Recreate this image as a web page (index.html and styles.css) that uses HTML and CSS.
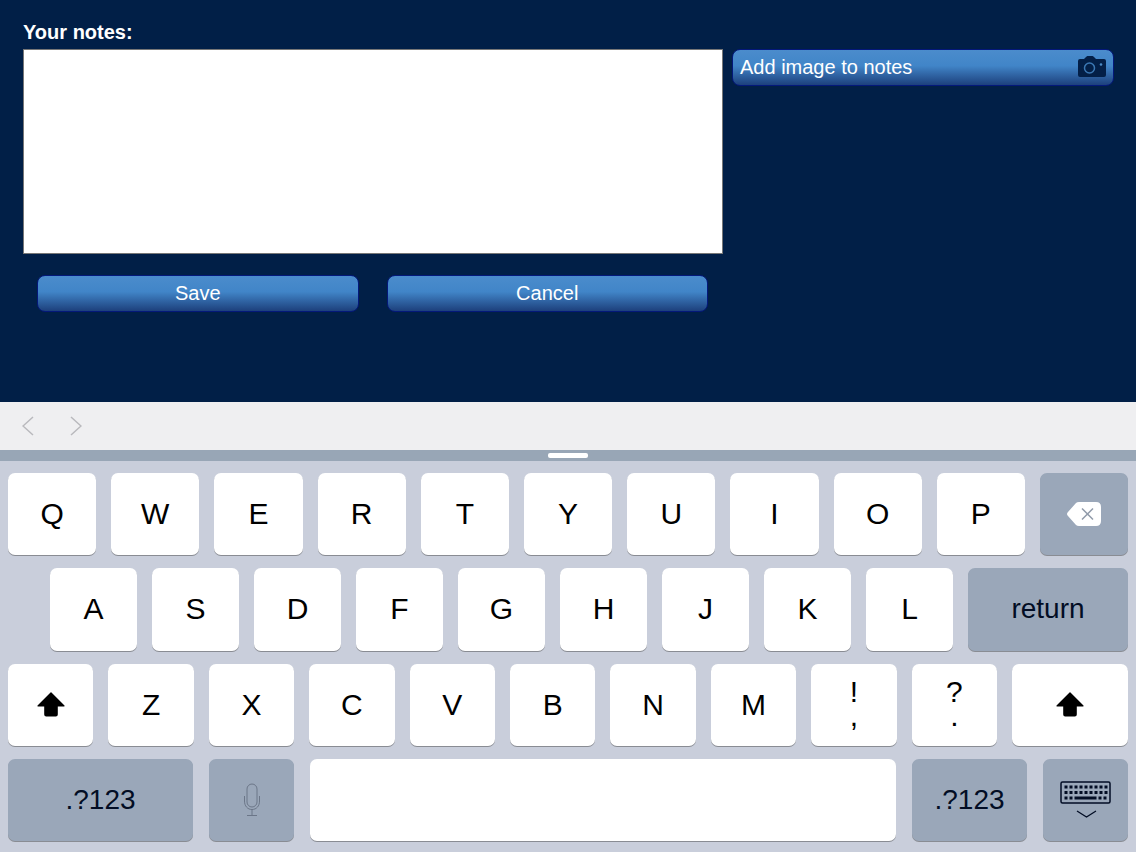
FILE: index.html
```html
<!DOCTYPE html>
<html lang="en">
<head>
  <meta charset="UTF-8">
  <meta name="viewport" content="width=device-width, initial-scale=1">
  <title>Your notes</title>
  <link rel="stylesheet" href="styles.css">
</head>
<body>

<form class="notes">
  <div class="notes-main">
    <label for="notes">Your notes:</label>
    <textarea id="notes"></textarea>
    <div class="actions">
      <button type="button" class="btn">Save</button>
      <button type="button" class="btn">Cancel</button>
    </div>
  </div>
  <div class="notes-side">
    <button type="button" class="btn btn-image">
      Add image to notes
      <svg width="28" height="22" viewBox="0 0 28 22">
        <path d="M2 3h4l2-2c1-1 1-1 2-1h4c1 0 1 0 2 1l2 2h8q2 0 2 2v14q0 2-2 2H2q-2 0-2-2V5q0-2 2-2z" fill="#031f47"/>
        <circle cx="11.500" cy="12" r="5" fill="none" stroke="#3b78b4" stroke-width="1.500"/>
        <circle cx="23" cy="8.500" r="1.300" fill="#4b8cc8"/>
      </svg>
    </button>
  </div>
</form>

<div class="assistant">
  <button type="button" aria-label="Previous field">
    <svg width="12" height="20" viewBox="0 0 12 20"><path d="M11 1L1 10l10 9"/></svg>
  </button>
  <button type="button" aria-label="Next field">
    <svg width="12" height="20" viewBox="0 0 12 20"><path d="M1 1l10 9-10 9"/></svg>
  </button>
</div>

<div class="handle"><span></span></div>

<div class="keyboard">
  <div class="row">
    <button type="button" class="key">Q</button>
    <button type="button" class="key">W</button>
    <button type="button" class="key">E</button>
    <button type="button" class="key">R</button>
    <button type="button" class="key">T</button>
    <button type="button" class="key">Y</button>
    <button type="button" class="key">U</button>
    <button type="button" class="key">I</button>
    <button type="button" class="key">O</button>
    <button type="button" class="key">P</button>
    <button type="button" class="key dark" aria-label="Delete">
      <svg width="34" height="26" viewBox="0 0 34 26">
        <path d="M12 1h17q5 0 5 5v14q0 5-5 5H12q-2 0-3-1L1 15q-2-2 0-4l8-9q1-1 3-1z" fill="#fff"/>
        <path d="M15 7.500l11 11M26 7.500l-11 11" stroke="#919baa" stroke-width="1.500" fill="none"/>
      </svg>
    </button>
  </div>
  <div class="row row-home">
    <button type="button" class="key">A</button>
    <button type="button" class="key">S</button>
    <button type="button" class="key">D</button>
    <button type="button" class="key">F</button>
    <button type="button" class="key">G</button>
    <button type="button" class="key">H</button>
    <button type="button" class="key">J</button>
    <button type="button" class="key">K</button>
    <button type="button" class="key">L</button>
    <button type="button" class="key dark return">return</button>
  </div>
  <div class="row">
    <button type="button" class="key" aria-label="Shift">
      <svg width="28" height="25" viewBox="0 0 28 25"><path d="M13.500.500q.500-.500 1 0l13 13q.500 1-.500 1h-6.200V22.500q0 2-2 2h-9.600q-2 0-2-2V14.500H1q-1 0-.500-1z"/></svg>
    </button>
    <button type="button" class="key">Z</button>
    <button type="button" class="key">X</button>
    <button type="button" class="key">C</button>
    <button type="button" class="key">V</button>
    <button type="button" class="key">B</button>
    <button type="button" class="key">N</button>
    <button type="button" class="key">M</button>
    <button type="button" class="key double">!
,</button>
    <button type="button" class="key double">?
.</button>
    <button type="button" class="key shift-right" aria-label="Shift">
      <svg width="28" height="25" viewBox="0 0 28 25"><path d="M13.500.500q.500-.500 1 0l13 13q.500 1-.500 1h-6.200V22.500q0 2-2 2h-9.600q-2 0-2-2V14.500H1q-1 0-.500-1z"/></svg>
    </button>
  </div>
  <div class="row row-space">
    <button type="button" class="key dark">.?123</button>
    <button type="button" class="key dark" aria-label="Dictate">
      <svg class="mic" width="16" height="34" viewBox="0 0 16 34">
        <rect x="3" y="1" width="10" height="23" rx="5"/>
        <path d="M.500 13v5c0 5 3 8.500 7.500 8.500s7.500-3.500 7.500-8.500v-5M8 26.500v6M3 32.500h10"/>
      </svg>
    </button>
    <button type="button" class="key" aria-label="Space"></button>
    <button type="button" class="key dark">.?123</button>
    <button type="button" class="key dark" aria-label="Hide keyboard">
      <svg width="52" height="38" viewBox="0 0 52 38" fill="none" stroke="#020d24">
        <rect x="1" y="1" width="49" height="21" rx="1.500" stroke-width="1.500"/>
        <path d="M4.500 6h43M4.500 11.500h43" stroke-width="3" stroke-dasharray="3 2"/>
        <path d="M4.500 17h3m2 0h3m2 0h22m2 0h3m2 0h3" stroke-width="3"/>
        <path d="M17 30l9.500 6 9.500-6" stroke-width="1.300"/>
      </svg>
    </button>
  </div>
</div>

</body>
</html>
```

FILE: styles.css
```css
:root {
  --navy: #011f47;
  --key-dark: #9aa7b9;
  --board: #c9cedb;
}

* {
  box-sizing: border-box;
}

body {
  margin: 0;
  min-height: 100vh;
  display: flex;
  flex-direction: column;
  background: var(--navy);
  font-family: 'Liberation Sans', Arial, sans-serif;
}

button {
  font-family: inherit;
  border: none;
  padding: 0;
  cursor: pointer;
}

svg {
  display: block;
}

/* notes form */
.notes {
  display: grid;
  grid-template-columns: 700fr 382fr;
  gap: 9px;
  padding: 20px 22px 90px 23px;
}

.notes label {
  display: block;
  color: #fff;
  font-size: 20px;
  font-weight: bold;
  line-height: 24px;
  margin-bottom: 5px;
}

.notes textarea {
  display: block;
  width: 100%;
  height: 205px;
  padding: 8px;
  background: #fff;
  border: 1px solid #777;
  border-radius: 0;
  font-family: inherit;
  font-size: 20px;
  resize: none;
  outline: none;
}

.actions {
  display: grid;
  grid-template-columns: 1fr 1fr;
  gap: 28px;
  padding: 21px 15px 0 14px;
}

.btn {
  height: 37px;
  padding-bottom: 2px;
  border: 1px solid #04187a;
  border-radius: 8px;
  background: linear-gradient(#4b8ccc, #4185c8 45%, #1d407c);
  color: #fff;
  font-size: 20px;
  line-height: 24px;
}

.notes-side {
  padding-top: 29px;
}

.btn-image {
  display: flex;
  align-items: center;
  justify-content: space-between;
  width: 100%;
  padding: 0 7px 2px;
}

/* bar above the keys */
.assistant {
  display: flex;
  align-items: center;
  gap: 36px;
  height: 48px;
  padding-left: 22px;
  background: #efeff1;
}

.assistant button {
  background: none;
}

.assistant path {
  fill: none;
  stroke: #b9b9bd;
  stroke-width: 1.5;
}

.handle {
  display: flex;
  align-items: center;
  justify-content: center;
  height: 11px;
  background: #98a6b6;
}

.handle span {
  width: 40px;
  height: 5px;
  border-radius: 2px;
  background: #fff;
}

/* keyboard */
.keyboard {
  flex: 1;
  display: grid;
  grid-auto-rows: 1fr;
  gap: 13px;
  padding: 12px 8px 11px;
  background: var(--board);
}

.row {
  display: flex;
  gap: 15px;
  min-height: 60px;
}

.row-home {
  padding-left: 42px;
}

.key {
  flex: 1 1 0;
  min-width: 0;
  display: flex;
  align-items: center;
  justify-content: center;
  background: #fff;
  border-radius: 7px;
  box-shadow: 0 1px 0 #898c93;
  color: #000;
  font-size: 30px;
  line-height: 32px;
}

.dark {
  background: var(--key-dark);
  color: #020d24;
  font-size: 28px;
}

.return {
  flex: 0 0 160px;
}

.shift-right {
  flex: 0 0 116px;
}

/* two symbols, one above the other */
.double {
  white-space: pre-line;
  line-height: 24px;
  padding-bottom: 2px;
}

.row-space {
  display: grid;
  grid-template-columns: 185px 85px 1fr 115px 85px;
  gap: 16px;
}

.mic {
  fill: none;
  stroke: #6b7688;
}

@media screen and (max-width: 768px) {
  .notes {
    grid-template-columns: 1fr;
    padding-bottom: 24px;
  }

  .notes-side {
    padding-top: 0;
  }

  .keyboard {
    gap: 8px;
    padding: 8px 4px;
  }

  .row {
    gap: 5px;
  }

  .row-home {
    padding-left: 16px;
  }

  .key {
    font-size: 20px;
  }

  .return,
  .shift-right {
    flex-basis: 72px;
  }

  .row-space {
    grid-template-columns: 72px 52px 1fr 72px 60px;
  }
}
```
